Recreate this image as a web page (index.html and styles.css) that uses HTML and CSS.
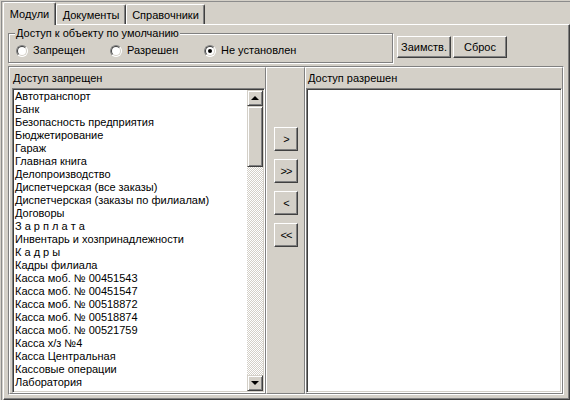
FILE: index.html
```html
<!DOCTYPE html>
<html>
<head>
<meta charset="utf-8">
<link rel="stylesheet" href="styles.css">
</head>
<body>
<div class="win">
  <div class="tabs">
    <div class="tab active">Модули</div>
    <div class="tab t2">Документы</div>
    <div class="tab t3">Справочники</div>
  </div>
  <div class="page">
    <div class="toprow">
      <div class="group">
        <span class="gcap">Доступ к объекту по умолчанию</span>
        <div class="radios">
          <label class="radio"><span class="rb"></span>Запрещен</label>
          <label class="radio"><span class="rb"></span>Разрешен</label>
          <label class="radio"><span class="rb on"></span>Не установлен</label>
        </div>
      </div>
      <button class="btn b1">Заимств.</button>
      <button class="btn b2">Сброс</button>
    </div>
    <div class="lower">
      <div class="pane pane-left">
        <div class="cap">Доступ запрещен</div>
        <div class="listbox lb-left">
          <ul class="items">
            <li>Автотранспорт</li>
            <li>Банк</li>
            <li>Безопасность предприятия</li>
            <li>Бюджетирование</li>
            <li>Гараж</li>
            <li>Главная книга</li>
            <li>Делопроизводство</li>
            <li>Диспетчерская (все заказы)</li>
            <li>Диспетчерская (заказы по филиалам)</li>
            <li>Договоры</li>
            <li>З а р п л а т а</li>
            <li>Инвентарь и хозпринадлежности</li>
            <li>К а д р ы</li>
            <li>Кадры филиала</li>
            <li>Касса моб. № 00451543</li>
            <li>Касса моб. № 00451547</li>
            <li>Касса моб. № 00518872</li>
            <li>Касса моб. № 00518874</li>
            <li>Касса моб. № 00521759</li>
            <li>Касса х/з №4</li>
            <li>Касса Центральная</li>
            <li>Кассовые операции</li>
            <li>Лаборатория</li>
          </ul>
          <div class="sbar">
            <div class="sbtn"><span class="arr up"></span></div>
            <div class="thumb"></div>
            <div class="track"></div>
            <div class="sbtn"><span class="arr down"></span></div>
          </div>
        </div>
      </div>
      <div class="pane pane-mid">
        <button class="mbtn">&gt;</button>
        <button class="mbtn">&gt;&gt;</button>
        <button class="mbtn">&lt;</button>
        <button class="mbtn">&lt;&lt;</button>
      </div>
      <div class="pane pane-right">
        <div class="cap">Доступ разрешен</div>
        <div class="listbox lb-right"></div>
      </div>
    </div>
  </div>
</div>
</body>
</html>
```
FILE: styles.css
```css
* { box-sizing: border-box; }
html, body { margin: 0; padding: 0; background: #d4d0c8; }
body { font: 11px/13px "Liberation Sans", Arial, sans-serif; color: #000; }

.win {
  margin: 1px 0 0 1px;
  width: 569px;
  height: 399px;
  border-top: 1px solid #8c8c8c;
  border-left: 1px solid #8c8c8c;
  background: #d4d0c8;
  overflow: hidden;
}

/* tabs */
.tabs {
  display: flex;
  align-items: flex-end;
  height: 22px;
  padding-left: 1px;
}
.tab {
  height: 20px;
  padding-top: 4px;
  text-align: center;
  border-top: 1px solid #fff;
  border-left: 1px solid #fff;
  border-right: 1px solid #404040;
  box-shadow: inset -1px 0 0 #808080;
  border-radius: 2px 2px 0 0;
  white-space: nowrap;
}
.tab.active {
  width: 53px;
  height: 23px;
  margin-bottom: -1px;
  padding-top: 5px;
  background: #d4d0c8;
  position: relative;
  z-index: 1;
}
.tab.t2 { width: 70px; }
.tab.t3 { width: 79px; }

/* page */
.page {
  margin-left: 1px;
  width: 567px;
  height: 376px;
  border-top: 1px solid #fff;
  border-left: 1px solid #fff;
  border-right: 1px solid #404040;
  border-bottom: 1px solid #404040;
  box-shadow: inset -1px -1px 0 #808080;
}

.toprow {
  display: flex;
  align-items: flex-start;
  height: 41px;
}
.group {
  position: relative;
  margin: 8px 0 0 4px;
  width: 385px;
  height: 30px;
  border: 1px solid #808080;
  box-shadow: inset 1px 1px 0 #fff, 1px 1px 0 #fff;
}
.gcap {
  position: absolute;
  top: -7px;
  left: 6px;
  padding: 0 1px;
  background: #d4d0c8;
  white-space: nowrap;
}
.radios {
  display: flex;
  padding: 10px 0 0 7px;
}
.radio {
  width: 94px;
  display: flex;
  align-items: center;
  height: 13px;
  white-space: nowrap;
}
.rb {
  position: relative;
  flex: none;
  width: 12px;
  height: 12px;
  margin-right: 5px;
  border-radius: 50%;
  border: 1px solid;
  border-color: #808080 #fff #fff #808080;
  background: #fff;
}
.rb::before {
  content: "";
  position: absolute;
  inset: 0;
  border-radius: 50%;
  border: 1px solid;
  border-color: #404040 #d4d0c8 #d4d0c8 #404040;
}
.rb.on::after {
  content: "";
  position: absolute;
  left: 3px;
  top: 3px;
  width: 4px;
  height: 4px;
  border-radius: 50%;
  background: #000;
}

.btn, .mbtn {
  font: inherit;
  color: #000;
  background: #d4d0c8;
  border: 1px solid;
  border-color: #fff #404040 #404040 #fff;
  box-shadow: inset -1px -1px 0 #808080;
  padding: 0;
  line-height: 13px;
}
.btn {
  margin-top: 11px;
  height: 22px;
  width: 54px;
}
.btn.b1 { margin-left: 4px; }
.btn.b2 { margin-left: 2px; }

/* lower area */
.lower {
  margin-left: 4px;
  width: 556px;
  height: 329px;
  display: flex;
  border: 1px solid;
  border-color: #808080 #fff #fff #808080;
}
.pane {
  height: 100%;
  border: 1px solid;
  border-color: #fff #808080 #808080 #fff;
}
.pane-left { width: 257px; }
.pane-mid {
  width: 39px;
  display: flex;
  flex-direction: column;
  align-items: flex-start;
  gap: 8px;
  padding: 59px 0 0 7px;
}
.pane-right { width: 258px; }

.cap {
  padding: 4px 0 0 3px;
  height: 20px;
  white-space: nowrap;
}
.pane-right .cap { padding-left: 2px; }

.listbox {
  display: flex;
  height: 305px;
  padding: 1px;
  background: #fff;
  border: 1px solid;
  border-color: #808080 #fff #fff #808080;
  box-shadow: inset 1px 1px 0 #404040, inset -1px -1px 0 #d4d0c8;
}
.lb-left { margin-left: 2px; width: 253px; }
.lb-right { width: 256px; }

.items {
  flex: 1;
  list-style: none;
  margin: 0;
  padding: 0 0 0 1px;
  overflow: hidden;
  white-space: nowrap;
}
.items li { height: 13px; }

.sbar {
  width: 16px;
  display: flex;
  flex-direction: column;
}
.sbtn, .thumb {
  flex: none;
  background: #d4d0c8;
  border: 1px solid;
  border-color: #d4d0c8 #404040 #404040 #d4d0c8;
  box-shadow: inset 1px 1px 0 #fff, inset -1px -1px 0 #808080;
}
.sbtn {
  height: 16px;
  display: flex;
  align-items: center;
  justify-content: center;
}
.thumb { height: 61px; }
.track {
  flex: 1;
  background: repeating-conic-gradient(#d4d0c8 0 25%, #fff 0 50%) 0 0 / 2px 2px;
}
.arr {
  width: 0;
  height: 0;
  border-left: 4px solid transparent;
  border-right: 4px solid transparent;
}
.arr.up { border-bottom: 4px solid #000; }
.arr.down { border-top: 4px solid #000; }

.mbtn {
  width: 24px;
  height: 24px;
  flex: none;
  letter-spacing: -1px;
}
```
